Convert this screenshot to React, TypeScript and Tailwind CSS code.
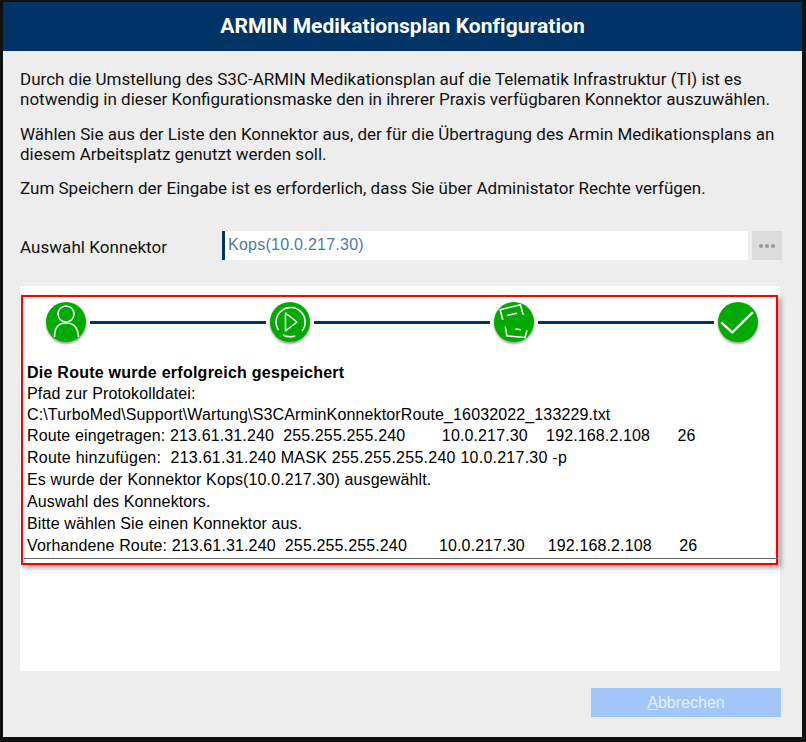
import React from 'react';

const StepCircle = ({ children }: { children: React.ReactNode }) => (
  <div className="w-10 h-10 shrink-0 rounded-full bg-[#00aa00] shadow-[0_2px_2px_rgba(0,0,0,0.35)]">
    <svg viewBox="0 0 40 40" className="w-10 h-10" fill="none" stroke="#fff" strokeWidth="1.5" strokeLinejoin="round">
      {children}
    </svg>
  </div>
);

const Connector = () => <div className="flex-1 h-[3px] mx-[4px] bg-[#003366]" />;

export default function App() {
  return (
    <div className="w-[806px] h-[742px] bg-[#111111] pl-[3px] pt-[2px] pr-[4px] pb-[5px] overflow-hidden">
      <div className="h-full flex flex-col bg-[#ededed] font-['Roboto',sans-serif] text-[#111111]">
        {/* Header */}
        <div className="h-[49px] shrink-0 flex items-center justify-center bg-[#003366] text-white text-[21px] tracking-[0.05px] font-bold">
          ARMIN Medikationsplan Konfiguration
        </div>

        {/* Intro text */}
        <div className="pl-[17px] pr-[20px] pt-[18px] text-[17px] leading-[20px]">
          <p>
            Durch die Umstellung des S3C-ARMIN Medikationsplan auf die Telematik Infrastruktur (TI) ist es
            <br />
            notwendig in dieser Konfigurationsmaske den in ihrerer Praxis verfügbaren Konnektor auszuwählen.
          </p>
          <p className="mt-[15px]">
            Wählen Sie aus der Liste den Konnektor aus, der für die Übertragung des Armin Medikationsplans an
            <br />
            diesem Arbeitsplatz genutzt werden soll.
          </p>
          <p className="mt-[14px]">Zum Speichern der Eingabe ist es erforderlich, dass Sie über Administator Rechte verfügen.</p>
        </div>

        {/* Connector selection */}
        <div className="mt-[33px] flex items-center h-[29px] pl-[17px] pr-[20px]">
          <div className="w-[202px] shrink-0 text-[17px] tracking-[0.05px] pt-[4px]">Auswahl Konnektor</div>
          <div className="w-[526px] h-full shrink-0 flex items-center border-l-[3px] border-[#003366] bg-white pl-[3px] pb-[2px] text-[16px] tracking-[0.25px] text-[#4f79a8] font-['Liberation_Sans',sans-serif]">
            Kops(10.0.217.30)
          </div>
          <div className="ml-[4px] w-[30px] h-full flex items-center justify-center gap-[2px] bg-[#dcdcdc]">
            <span className="w-1 h-1 rounded-full bg-[#999999]" />
            <span className="w-1 h-1 rounded-full bg-[#999999]" />
            <span className="w-1 h-1 rounded-full bg-[#999999]" />
          </div>
        </div>

        {/* Protocol panel */}
        <div className="mt-[26px] ml-[17px] w-[760px] h-[385px] bg-white pt-[9px] pl-[1px]">
          <div className="w-[757px] h-[270px] border-2 border-[#ff0000] shadow-[3px_3px_5px_rgba(0,0,0,0.35)] font-['Liberation_Sans',sans-serif] text-[16px] tracking-[0.13px] text-black">
            <div className="flex items-center pl-[23px] pr-[18px] pt-[5px]">
              <StepCircle>
                <circle cx="20" cy="12" r="8" />
                <path d="M8.5 35C8.5 25 13 21 20 21s12 4 12.5 14" />
              </StepCircle>
              <Connector />
              <StepCircle>
                <path d="M8.5 28A14.5 14.5 0 1 1 32 29" />
                <path d="M13 33a15 15 0 0 0 12 1" />
                <path d="M15.5 11l11.5 9-11.5 9z" />
              </StepCircle>
              <Connector />
              <StepCircle>
                <path d="M8.8 18L6.1 7.8l20.3-5.1 2.8 10.2" />
                <path d="M12.9 13.6l10.1-2.4" />
                <path d="M11.2 24.7L13 34l18 1.5 2-7" />
                <path d="M21.4 27l5.6.8" />
              </StepCircle>
              <Connector />
              <StepCircle>
                <path d="M3.4 20.3l10.8 10.2L34.9 10.2" strokeWidth="2.4" />
              </StepCircle>
            </div>
            <div className="pl-[4px] pt-[20px] whitespace-pre">
              <div className="font-bold tracking-[0.25px] leading-[21px]">Die Route wurde erfolgreich gespeichert</div>
              <div className="leading-[21px]">Pfad zur Protokolldatei:</div>
              <div className="leading-[21px]">C:\TurboMed\Support\Wartung\S3CArminKonnektorRoute_16032022_133229.txt</div>
              <div className="leading-[22px]">Route eingetragen: 213.61.31.240  255.255.255.240        10.0.217.30    192.168.2.108      26</div>
              <div className="leading-[22px] tracking-[0.25px]">Route hinzufügen:  213.61.31.240 MASK 255.255.255.240 10.0.217.30 -p</div>
              <div className="leading-[22px]">Es wurde der Konnektor Kops(10.0.217.30) ausgewählt.</div>
              <div className="leading-[22px]">Auswahl des Konnektors.</div>
              <div className="leading-[22px]">Bitte wählen Sie einen Konnektor aus.</div>
              <div className="leading-[22px]">Vorhandene Route: 213.61.31.240  255.255.255.240       10.0.217.30     192.168.2.108      26</div>
            </div>
            <div className="mt-[1px] ml-px -mr-[2px] h-px bg-[#666666]" />
          </div>
        </div>

        {/* Footer */}
        <div className="flex justify-end pr-[21px] pt-[17px]">
          <div className="w-[190px] h-[29px] flex items-center justify-center bg-[#a2c6f7] text-[#e8f0fc] text-[16px] font-['Liberation_Sans',sans-serif]">
            <span>
              <span className="underline">A</span>bbrechen
            </span>
          </div>
        </div>
      </div>
    </div>
  );
}
